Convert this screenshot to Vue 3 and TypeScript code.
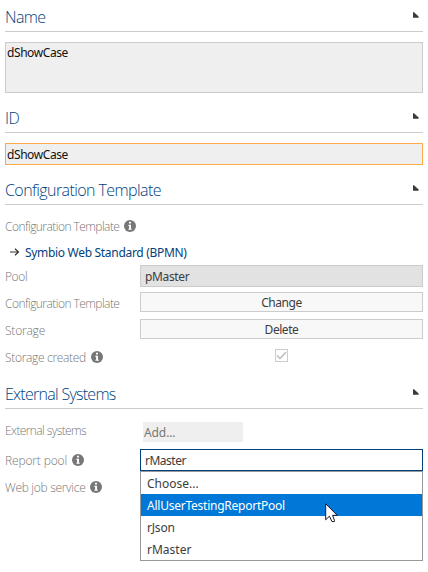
<script setup lang="ts">
import { ref } from 'vue'

const pool = ref('pMaster')
const reportPool = ref('rMaster')
const options: string[] = ['Choose...', 'AllUserTestingReportPool', 'rJson', 'rMaster']
const highlighted = ref(1)
</script>

<template>
  <main class="panel">
    <header class="heading first">
      <h2 class="t-name">Name</h2>
      <svg class="corner" viewBox="0 0 6 6"><path d="M0 .3H1L5.6 4.6V5.8H0Z" /></svg>
    </header>
    <div class="field tall"><span class="t-val">dShowCase</span></div>

    <header class="heading">
      <h2 class="t-id">ID</h2>
      <svg class="corner" viewBox="0 0 6 6"><path d="M0 .3H1L5.6 4.6V5.8H0Z" /></svg>
    </header>
    <div class="field focused"><span class="t-val">dShowCase</span></div>

    <header class="heading">
      <h2 class="t-conf">Configuration Template</h2>
      <svg class="corner" viewBox="0 0 6 6"><path d="M0 .3H1L5.6 4.6V5.8H0Z" /></svg>
    </header>
    <section class="rows">
      <div class="row intro">
        <div class="label"><span class="l-conf">Configuration Template</span>
          <svg class="info" viewBox="0 0 12 12"><circle cx="6" cy="6" r="6" /><path d="M5 1.8H7V3.6H5ZM4.4 4.8H7V8.7H7.8V9.8H4.4V8.7H5.1V6H4.4Z" /></svg>
        </div>
      </div>
      <a class="link">
        <svg class="arrow" viewBox="0 0 10 8"><path d="M0 4H8.5M5 .7L8.5 4L5 7.3" /></svg>
        <span class="t-link">Symbio Web Standard (BPMN)</span>
      </a>
      <div class="row">
        <div class="label"><span class="l-pool">Pool</span></div>
        <div class="control readonly"><span class="t-pool">{{ pool }}</span></div>
      </div>
      <div class="row">
        <div class="label"><span class="l-conf">Configuration Template</span></div>
        <button class="control button"><span class="t-change">Change</span></button>
      </div>
      <div class="row">
        <div class="label"><span class="l-storage">Storage</span></div>
        <button class="control button"><span class="t-delete">Delete</span></button>
      </div>
      <div class="row">
        <div class="label"><span class="l-created">Storage created</span>
          <svg class="info" viewBox="0 0 12 12"><circle cx="6" cy="6" r="6" /><path d="M5 1.8H7V3.6H5ZM4.4 4.8H7V8.7H7.8V9.8H4.4V8.7H5.1V6H4.4Z" /></svg>
        </div>
        <div class="check"><svg viewBox="0 0 11 11"><path d="M1 5.5L4 8.5L10 2.2" /></svg></div>
      </div>
    </section>

    <header class="heading compact">
      <h2 class="t-ext">External Systems</h2>
      <svg class="corner" viewBox="0 0 6 6"><path d="M0 .3H1L5.6 4.6V5.8H0Z" /></svg>
    </header>
    <section class="rows external">
      <div class="row systems">
        <div class="label"><span class="l-ext">External systems</span></div>
        <div class="add"><span class="t-add">Add...</span></div>
      </div>
      <div class="row">
        <div class="label"><span class="l-report">Report pool</span>
          <svg class="info" viewBox="0 0 12 12"><circle cx="6" cy="6" r="6" /><path d="M5 1.8H7V3.6H5ZM4.4 4.8H7V8.7H7.8V9.8H4.4V8.7H5.1V6H4.4Z" /></svg>
        </div>
        <div class="control select">
          <span class="t-report">{{ reportPool }}</span>
          <ul class="menu">
            <li v-for="(option, i) in options" :key="option" :class="['o' + i, { active: i === highlighted }]" @mouseenter="highlighted = i"><span>{{ option }}</span></li>
          </ul>
          <svg class="cursor" viewBox="0 0 13 20"><path d="M.7 .8V16.8L4.4 13.2L7 18.6H9.4V17.3L7.6 12.3H12.2Z" /></svg>
        </div>
      </div>
      <div class="row">
        <div class="label"><span class="l-web">Web job service</span>
          <svg class="info" viewBox="0 0 12 12"><circle cx="6" cy="6" r="6" /><path d="M5 1.8H7V3.6H5ZM4.4 4.8H7V8.7H7.8V9.8H4.4V8.7H5.1V6H4.4Z" /></svg>
        </div>
      </div>
    </section>
  </main>
</template>

<style>
body { background: #fff; }
</style>

<style scoped>
* { box-sizing: border-box; }
.panel {
  width: 428px;
  height: 572px;
  padding: 0 5px;
  overflow: hidden;
  background: #fff;
  color: #3c3c3c;
  font: 12px/18px "Noto Sans", "Open Sans", sans-serif;
  white-space: nowrap;
}
.heading {
  display: flex;
  justify-content: space-between;
  align-items: flex-start;
  height: 40px;
  margin-bottom: 10px;
  padding-top: 14px;
  border-bottom: 1px solid #ccc;
}
.heading.first { height: 32px; padding-top: 6px; }
.heading.compact { height: 39px; padding-top: 13px; }
h2 {
  margin: 0;
  color: #00427d;
  font: 300 16px/22px "Open Sans", "Noto Sans", sans-serif;
}
.corner { width: 6px; height: 6px; margin: 6px 4px 0 0; fill: #3a3a3a; }
.field {
  width: 418px;
  height: 22px;
  padding: 2px 1px;
  border: 1px solid #ccc;
  background: #efefef;
  color: #111;
  line-height: 17px;
}
.field.tall { height: 51px; padding-top: 1px; }
.field.focused { border-color: #ffa94d; }
.heading + .rows { margin-top: -2px; }
.heading + .external { margin-top: -3px; }
.row { display: grid; grid-template-columns: 135px 283px; height: 27px; align-items: start; }
.label {
  display: flex;
  align-items: center;
  gap: 5px;
  padding-top: 6px;
  color: #777;
  font: 300 12px/18px "Open Sans", "Noto Sans", sans-serif;
}
.intro .label { padding-top: 5px; }
.info { flex: none; width: 12px; height: 12px; margin-bottom: 2px; fill: #777; }
.info path { fill: #fff; }
.link { display: flex; align-items: center; height: 22px; padding: 3px 0 0 5px; color: #00427d; }
.arrow { width: 10px; height: 8px; margin: -2px 5px 0 0; fill: none; stroke: #333; stroke-width: 1.2; }
.control { position: relative; height: 22px; margin: 3px 0 0; border: 1px solid #ccc; padding: 2px 4px; color: #3c3c3c; line-height: 18px; }
.readonly { background: #e2e2e2; }
.button { height: 20px; padding: 2px 0 0; background: #f8f8f8; font: inherit; line-height: 16px; border-radius: 0; text-align: center; }
.check { justify-self: center; width: 13px; height: 13px; margin-top: 6px; border: 1px solid #ccc; }
.check svg { display: block; width: 11px; height: 11px; fill: none; stroke: #bbb; stroke-width: 1.5; }
.external .systems { height: 30px; }
.add { width: 100px; height: 20px; margin: 6px 0 0 3px; padding: 2px 1px 0; background: #efefef; color: #777; }
.select { border-color: #00427d; background: #fff; }
.menu {
  position: absolute;
  z-index: 1;
  top: 21px;
  left: -1px;
  width: 283px;
  height: 90px;
  margin: 0;
  padding: 0;
  list-style: none;
  border: 1px solid #999;
  background: #fff;
}
.menu li { height: 22px; padding: 3px 6px 1px; line-height: 18px; }
.menu li.active { background: #0078d7; color: #fff; }
.cursor { position: absolute; z-index: 2; top: 53px; left: 184px; width: 13px; height: 20px; fill: #fff; stroke: #16162a; stroke-width: 1; }

.t-name { letter-spacing: -.6px; }
.t-id { letter-spacing: -.5px; }
.t-conf { letter-spacing: -.58px; }
.t-ext { letter-spacing: -.72px; }
.t-val { letter-spacing: -.42px; }
.t-link { letter-spacing: -.31px; }
.t-pool { letter-spacing: -.35px; }
.t-report { letter-spacing: -.5px; }
.t-change, .t-delete { letter-spacing: -.45px; }
.t-add { letter-spacing: -.1px; }
.l-conf { letter-spacing: -.55px; }
.l-pool { letter-spacing: -.4px; }
.l-storage { letter-spacing: -.2px; }
.l-created { letter-spacing: -.32px; }
.l-ext { letter-spacing: -.6px; }
.l-report { letter-spacing: -.15px; }
.l-web { letter-spacing: -.3px; }
.o1 { letter-spacing: -.24px; }
.o2 { letter-spacing: -.2px; }
</style>
